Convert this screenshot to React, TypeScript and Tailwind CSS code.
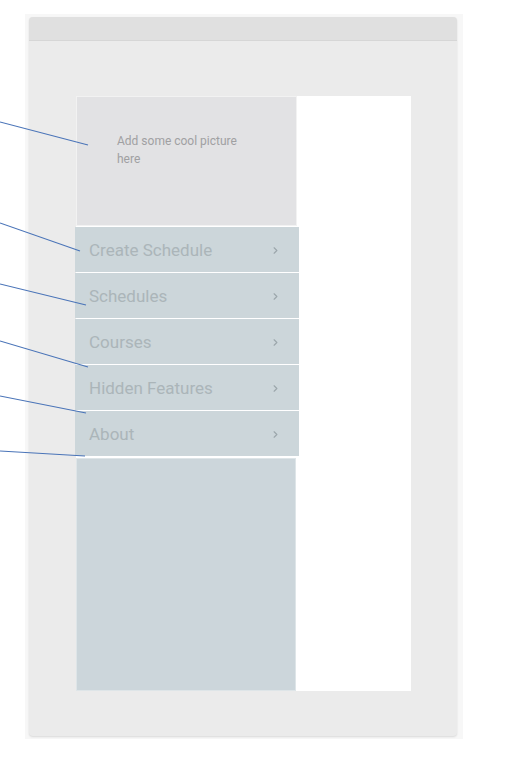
import { ChevronRight } from 'lucide-react';

const menuItems = ['Create Schedule', 'Schedules', 'Courses', 'Hidden Features', 'About'];

// annotation pointers drawn on top of the mockup
const pointers = [
  { x1: 0, y1: 122, x2: 88, y2: 145 },
  { x1: 0, y1: 223, x2: 80, y2: 251 },
  { x1: 0, y1: 284, x2: 86, y2: 305 },
  { x1: 0, y1: 341, x2: 88, y2: 367 },
  { x1: 0, y1: 396, x2: 86, y2: 413 },
  { x1: 0, y1: 451, x2: 85, y2: 456 },
];

const MenuItem = ({ label }: { label: string }) => {
  return (
    <div className="-ml-px mt-px flex h-[45px] w-[224px] items-center justify-between bg-[#ccd6da] pl-[14px] pr-[18px] pt-[2px]">
      <span className="text-[17px] text-[#abb5b9]">{label}</span>
      <ChevronRight size={11} strokeWidth={2.5} className="text-[#9ba6ab]" />
    </div>
  );
};

export default function App() {
  return (
    <div className="relative h-[771px] w-[508px] overflow-hidden bg-white font-['Roboto',sans-serif]">
      <div className="ml-[25px] mt-[14px] w-[438px] bg-[#f7f7f7] pb-[3px] pl-[4px] pr-[6px] pt-[3px]">
        <div className="overflow-hidden rounded-[4px] bg-[#ebebeb] shadow-[0_1px_2px_rgba(0,0,0,0.12)]">
          <div className="h-[24px] border-b border-[#d6d6d6] bg-[#e0e0e0]" />
          <div className="px-[47px] pb-[45px] pt-[55px]">
            <div className="flex h-[595px] w-[335px] bg-white">
              <div className="flex w-[221px] flex-col">
                <div className="h-[130px] border border-[#f2f2f2] bg-[#e2e2e4] pl-[40px] pt-[35px]">
                  <p className="w-[130px] text-[12px] leading-[18px] text-[#a0a0a2]">Add some cool picture here</p>
                </div>
                {menuItems.map((item) => (
                  <MenuItem key={item} label={item} />
                ))}
                <div className="mt-[2px] h-[233px] w-[220px] border border-[#dee5e8] bg-[#ccd6db]" />
              </div>
            </div>
          </div>
        </div>
      </div>

      <svg className="pointer-events-none absolute left-0 top-0" width="508" height="771">
        {pointers.map((p, i) => (
          <line key={i} x1={p.x1} y1={p.y1} x2={p.x2} y2={p.y2} stroke="#4a74b8" strokeWidth="1.1" />
        ))}
      </svg>
    </div>
  );
}
